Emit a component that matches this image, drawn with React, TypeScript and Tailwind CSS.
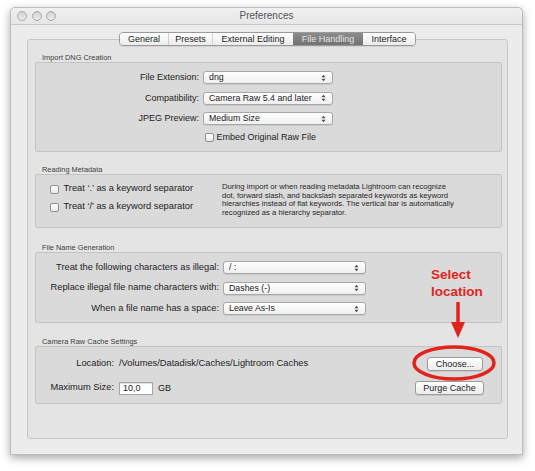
import React from 'react';

const tabs = [
  { label: 'General', w: 'w-[48px]' },
  { label: 'Presets', w: 'w-[44px]' },
  { label: 'External Editing', w: 'w-[81px]' },
  { label: 'File Handling', w: 'w-[70px]', active: true },
  { label: 'Interface', w: 'w-[52px]' },
];

const UpDown: React.FC = () => (
  <svg width="5" height="8" viewBox="0 0 5 8" className="shrink-0">
    <path d="M0.5 3.2 L2.5 0.8 L4.5 3.2 Z" fill="#4a4a4a" />
    <path d="M0.5 4.8 L2.5 7.2 L4.5 4.8 Z" fill="#4a4a4a" />
  </svg>
);

const Select: React.FC<{ value: string; w: string }> = ({ value, w }) => (
  <div
    className={`${w} h-[13px] flex items-center justify-between rounded-[3px] border border-[#a7a7a7] bg-gradient-to-b from-white to-[#efefef] shadow-[0_1px_0_rgba(0,0,0,0.07)] pl-[5px] pr-[6px]`}
  >
    <span className="text-[8.8px] leading-none text-[#1c1c1c] whitespace-nowrap">{value}</span>
    <UpDown />
  </div>
);

const Checkbox: React.FC = () => (
  <div className="w-[9px] h-[9px] shrink-0 rounded-[2px] border border-[#8f8f8f] bg-gradient-to-b from-white to-[#e9e9e9]" />
);

const Button: React.FC<{ label: string; w: string }> = ({ label, w }) => (
  <div
    className={`${w} h-[14px] flex items-center justify-center rounded-[3px] border border-[#9b9b9b] bg-gradient-to-b from-white to-[#ececec] shadow-[0_1px_0_rgba(0,0,0,0.08)] text-[9px] leading-none text-[#1c1c1c]`}
  >
    {label}
  </div>
);

const Section: React.FC<{ title: string; className: string; box: string; children: React.ReactNode }> = ({
  title,
  className,
  box,
  children,
}) => (
  <div className={`ml-[7px] mr-[5px] ${className}`}>
    <div className="pl-[7px] text-[7.4px] leading-[9px] text-[#3c3c3c] whitespace-nowrap">{title}</div>
    <div className={`${box} rounded-[2px] border border-[#c4c4c4] bg-[#dadada]`}>{children}</div>
  </div>
);

export default function App() {
  return (
    <div className="relative w-[535px] h-[471px] bg-white pt-[7px] pl-[10px] overflow-hidden font-['Liberation_Sans',Arial,sans-serif] text-[#1c1c1c]">
      {/* Window */}
      <div className="w-[513px] h-[448px] rounded-t-[5px] border border-[#bdbdbd] bg-[#ececec] shadow-[0_3px_8px_rgba(0,0,0,0.35)]">
        {/* Title bar */}
        <div className="h-[17px] border-b border-[#c6c6c6] grid grid-cols-[1fr_auto_1fr] items-center rounded-t-[5px] bg-gradient-to-b from-[#f0f0f0] to-[#e6e6e6]">
          <div className="flex items-center gap-[4.5px] pl-[6px]">
            {[0, 1, 2].map(i => (
              <div
                key={i}
                className="w-[10px] h-[10px] rounded-full border border-[#a9a9a9] bg-gradient-to-b from-[#d2d2d2] to-[#ececec]"
              />
            ))}
          </div>
          <div className="text-[10px] leading-none text-[#555555]">Preferences</div>
          <div />
        </div>

        {/* Body */}
        <div className="pl-[16px] pr-[14px] pt-[7px]">
          {/* Tabs */}
          <div className="relative z-10 flex justify-center">
            <div className="flex h-[14px] rounded-[4px] border border-[#9a9a9a] overflow-hidden shadow-[0_1px_0_rgba(0,0,0,0.08)]">
              {tabs.map((t, i) => (
                <div
                  key={t.label}
                  className={`${t.w} h-full flex items-center justify-center text-[9px] leading-none whitespace-nowrap ${
                    t.active
                      ? 'bg-gradient-to-b from-[#8c8c8c] to-[#727272] text-[#e4e4e4]'
                      : 'bg-gradient-to-b from-white to-[#ececec] text-[#1c1c1c]'
                  } ${i > 0 && !t.active && !tabs[i - 1].active ? 'border-l border-[#d2d2d2]' : ''}`}
                >
                  {t.label}
                </div>
              ))}
            </div>
          </div>

          {/* Tab view */}
          <div className="-mt-[7px] h-[400px] rounded-[3px] border border-[#c6c6c6] bg-[#e4e4e4] pt-[13px]">
            <Section title="Import DNG Creation" className="" box="h-[90px]">
              <div className="pt-[8px] grid grid-cols-[163px_130px] gap-x-[4px] gap-y-[7.5px] items-center">
                <div className="text-right text-[9px] leading-none">File Extension:</div>
                <Select value="dng" w="w-[130px]" />
                <div className="text-right text-[9px] leading-none">Compatibility:</div>
                <Select value="Camera Raw 5.4 and later" w="w-[130px]" />
                <div className="text-right text-[9px] leading-none">JPEG Preview:</div>
                <Select value="Medium Size" w="w-[130px]" />
                <div />
                <div className="h-[10px] flex items-center gap-[2.5px] pl-[2px]">
                  <Checkbox />
                  <span className="text-[9px] leading-none whitespace-nowrap">Embed Original Raw File</span>
                </div>
              </div>
            </Section>

            <Section title="Reading Metadata" className="mt-[13px]" box="h-[54px]">
              <div className="flex items-start">
                <div className="w-[186px] pl-[14px] pt-[5px]">
                  <div className="h-[18px] flex items-center gap-[4.5px]">
                    <Checkbox />
                    <span className="text-[9.3px] leading-none whitespace-nowrap">Treat ‘.’ as a keyword separator</span>
                  </div>
                  <div className="h-[18px] flex items-center gap-[4.5px]">
                    <Checkbox />
                    <span className="text-[9.3px] leading-none whitespace-nowrap">Treat ‘/’ as a keyword separator</span>
                  </div>
                </div>
                <div className="pt-[8px] text-[7.7px] leading-[8.5px] text-[#262626] whitespace-nowrap">
                  During import or when reading metadata Lightroom can recognize
                  <br />
                  dot, forward slash, and backslash separated keywords as keyword
                  <br />
                  hierarchies instead of flat keywords. The vertical bar is automatically
                  <br />
                  recognized as a hierarchy separator.
                </div>
              </div>
            </Section>

            <Section title="File Name Generation" className="mt-[15px]" box="h-[71px]">
              <div className="pt-[8px] grid grid-cols-[183px_143px] gap-x-[4px] gap-y-[7.5px] items-center">
                <div className="text-right text-[9.3px] leading-none whitespace-nowrap">
                  Treat the following characters as illegal:
                </div>
                <Select value="/ :" w="w-[143px]" />
                <div className="text-right text-[9.3px] leading-none whitespace-nowrap">
                  Replace illegal file name characters with:
                </div>
                <Select value="Dashes (-)" w="w-[143px]" />
                <div className="text-right text-[9.3px] leading-none whitespace-nowrap">
                  When a file name has a space:
                </div>
                <Select value="Leave As-Is" w="w-[143px]" />
              </div>
            </Section>

            <Section title="Camera Raw Cache Settings" className="mt-[14px]" box="h-[58px]">
              <div className="pt-[10px] pr-[17px]">
                <div className="h-[14px] flex items-center">
                  <span className="w-[78px] text-right text-[9.3px] leading-none">Location:</span>
                  <span className="ml-[5px] text-[9.3px] leading-none whitespace-nowrap">
                    /Volumes/Datadisk/Caches/Lightroom Caches
                  </span>
                  <div className="flex-1" />
                  <div className="mr-[1px]">
                    <Button label="Choose..." w="w-[56px]" />
                  </div>
                </div>
                <div className="mt-[10px] h-[14px] flex items-center">
                  <span className="w-[78px] text-right text-[9.3px] leading-none whitespace-nowrap">Maximum Size:</span>
                  <div className="ml-[5px] w-[34px] h-[13px] flex items-center border border-[#a5a5a5] bg-white pl-[3px] shadow-[inset_0_1px_1px_rgba(0,0,0,0.15)] text-[9px] leading-none">
                    10,0
                  </div>
                  <span className="ml-[5px] text-[9px] leading-none">GB</span>
                  <div className="flex-1" />
                  <Button label="Purge Cache" w="w-[69px]" />
                </div>
              </div>
            </Section>
          </div>
        </div>
      </div>

      {/* Annotation */}
      <div className="absolute left-[431px] top-[266px] text-[13.5px] leading-[17px] font-bold text-[#e3231b]">
        Select
        <br />
        location
      </div>
      <svg className="absolute left-[448px] top-[300px]" width="20" height="40" viewBox="0 0 20 40">
        <line x1="10" y1="2" x2="10" y2="24" stroke="#e3231b" strokeWidth="3.5" />
        <polygon points="3,22 17,22 10,38" fill="#e3231b" />
      </svg>
      <svg className="absolute left-[410px] top-[343px]" width="88" height="40" viewBox="0 0 88 40">
        <ellipse cx="44" cy="20" rx="40" ry="16" fill="none" stroke="#e3231b" strokeWidth="3.5" />
      </svg>
    </div>
  );
}
